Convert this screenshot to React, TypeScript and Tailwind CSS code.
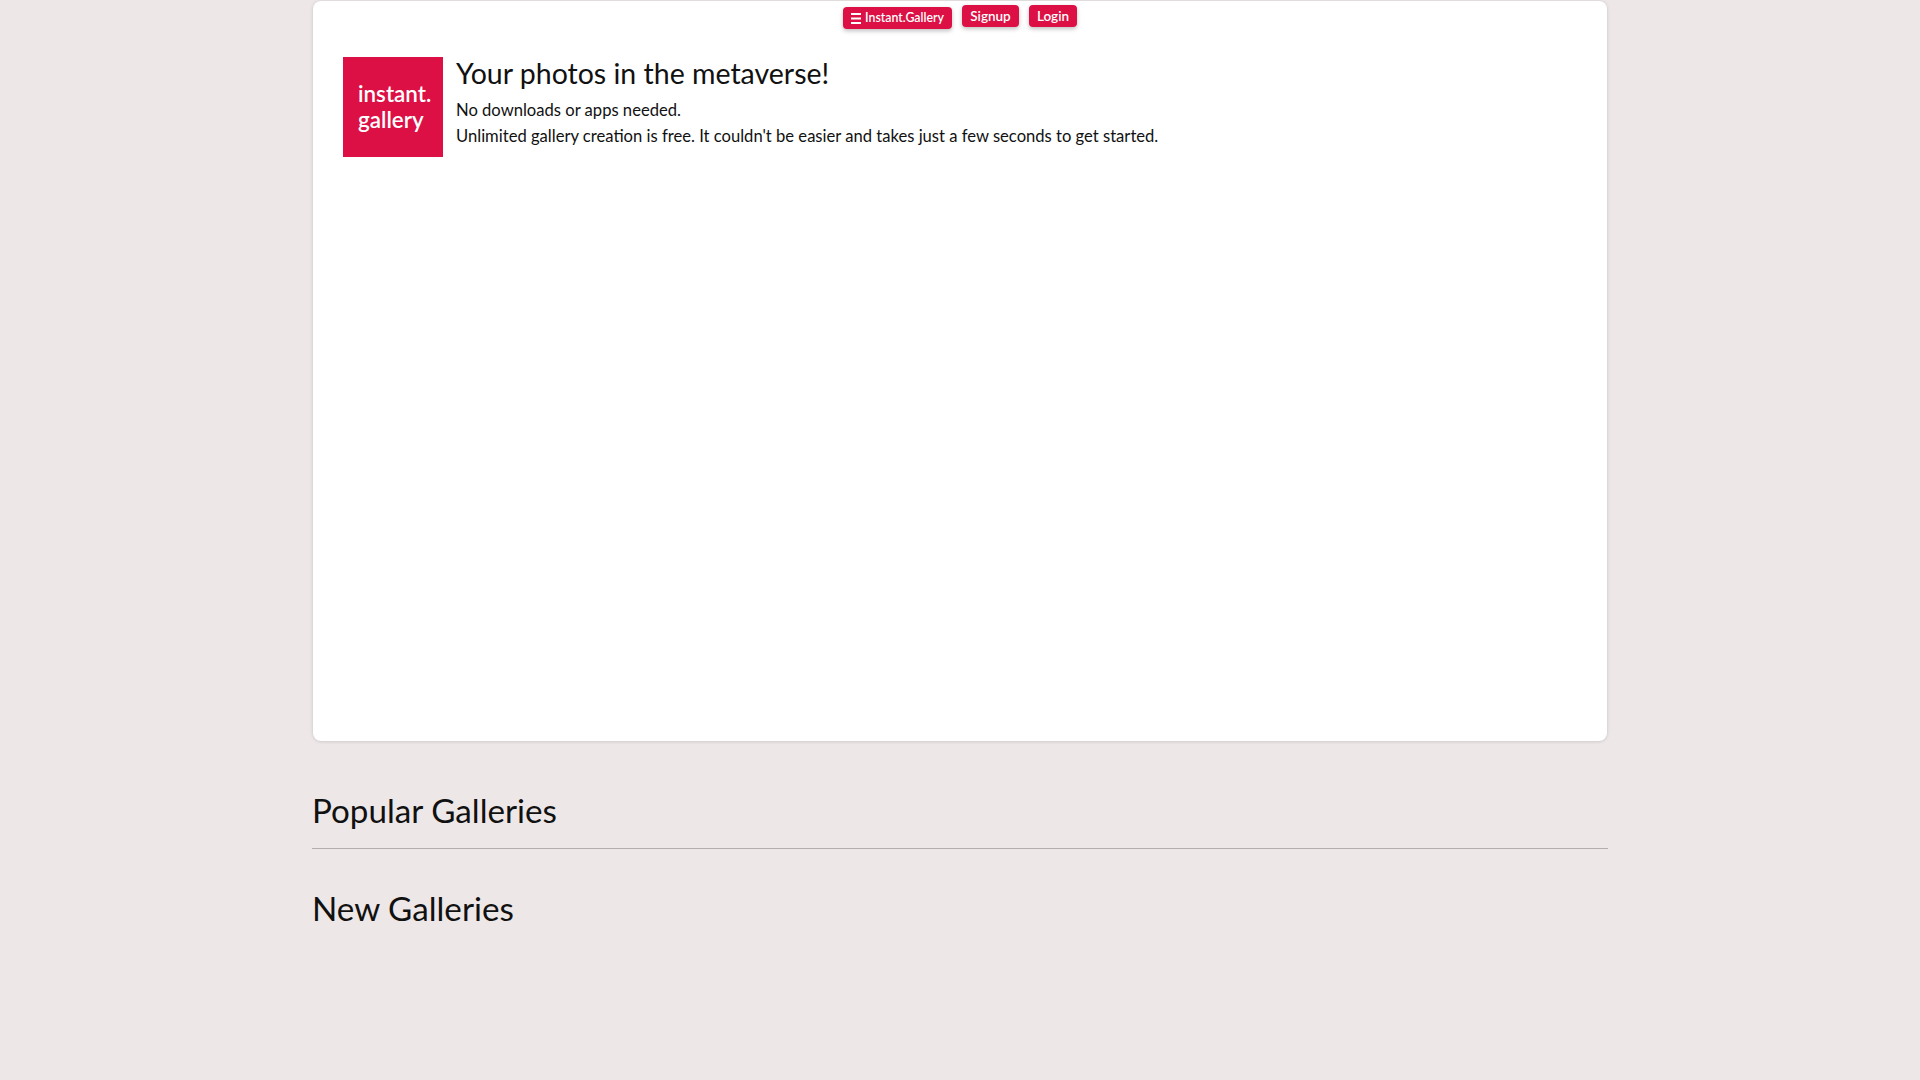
export default function App() {
  return (
    <div className="min-h-[1080px] bg-[#ede7e7] text-[#111] font-['Lato','Noto_Sans',sans-serif]">
      <div className="mx-auto w-[1296px] pt-px">
        <div className="mx-px h-[740px] rounded-lg bg-white shadow-[0_0_4px_rgba(0,0,0,0.10),0_1px_3px_rgba(0,0,0,0.06)]">
          <nav className="flex justify-center gap-[10px] pt-[4px] text-white font-semibold">
            <a className="mt-[2px] flex h-[22px] w-[109px] items-center justify-center gap-1 rounded bg-[#dc1044] text-[12.3px] shadow-[0_2px_4px_rgba(0,0,0,0.25)]">
              <svg width="10" height="11" viewBox="0 0 10 11" fill="#fff"><rect x="0" y="0" width="10" height="2" /><rect x="0" y="4.5" width="10" height="2" /><rect x="0" y="9" width="10" height="2" /></svg>
              Instant.Gallery
            </a>
            <a className="flex h-[22px] w-[57px] items-center justify-center rounded bg-[#dc1044] text-[13.5px] shadow-[0_2px_4px_rgba(0,0,0,0.25)]">Signup</a>
            <a className="flex h-[22px] w-[48px] items-center justify-center rounded bg-[#dc1044] text-[13.5px] shadow-[0_2px_4px_rgba(0,0,0,0.25)]">Login</a>
          </nav>
          <div className="mt-[28px] flex gap-[13px] pl-[30px]">
            <div className="flex h-[100px] w-[100px] flex-col justify-center bg-[#dc1044] pl-[15px] text-[22.4px] font-semibold leading-[26px] text-white">
              <span>instant.</span>
              <span>gallery</span>
            </div>
            <div>
              <h3 className="mt-[-1px] text-[28.5px] leading-[34px]">Your photos in the metaverse!</h3>
              <p className="mt-[7px] text-[16.6px] leading-[26px]">No downloads or apps needed.</p>
              <p className="text-[16.6px] leading-[26px]">Unlimited gallery creation is free. It couldn't be easier and takes just a few seconds to get started.</p>
            </div>
          </div>
        </div>
        <h2 className="mt-[49px] text-[33.2px] leading-[40px]">Popular Galleries</h2>
        <hr className="mt-[18px] border-t border-[#b3aeae]" />
        <h2 className="mt-[39px] text-[33.2px] leading-[40px]">New Galleries</h2>
      </div>
    </div>
  );
}
